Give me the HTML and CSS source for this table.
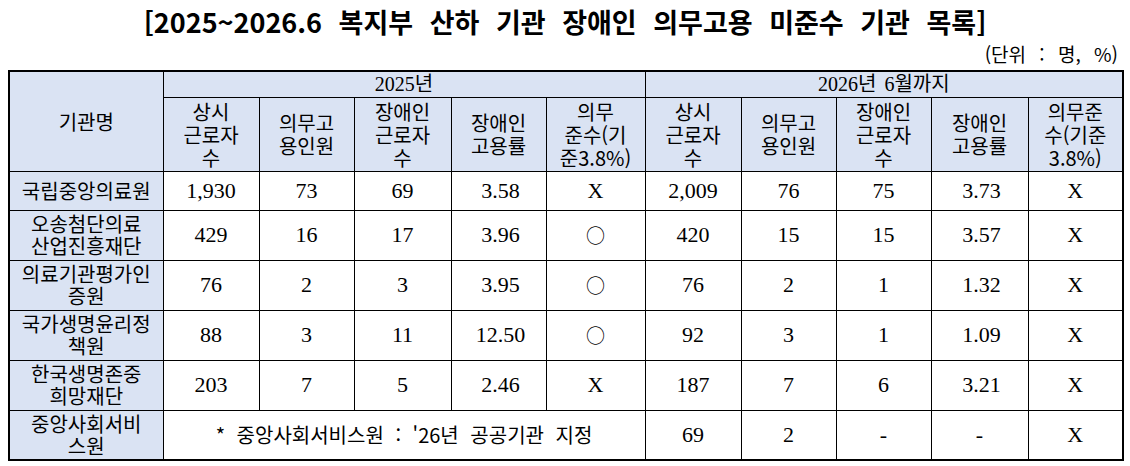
FILE: index.html
```html
<!DOCTYPE html>
<html lang="ko">
<head>
<meta charset="utf-8">
<title>복지부 산하 기관 장애인 의무고용 미준수 기관 목록</title>
<link rel="stylesheet" href="styles.css">
</head>
<body>
<div class="page">
  <h1 class="title">[2025~2026.6 복지부 산하 기관 장애인 의무고용 미준수 기관 목록]</h1>
  <div class="unit">(단위 : 명, %)</div>
  <table class="grid">
    <colgroup>
      <col class="c-name"><col class="c1"><col class="c2"><col class="c3"><col class="c4"><col class="c5">
      <col class="c6"><col class="c7"><col class="c8"><col class="c9"><col class="c10">
    </colgroup>
    <thead>
      <tr class="h1row">
        <th rowspan="2" class="hd">기관명</th>
        <th colspan="5" class="hd year">2025년</th>
        <th colspan="5" class="hd year">2026년 6월까지</th>
      </tr>
      <tr class="h2row">
        <th class="hd">상시<br>근로자<br>수</th>
        <th class="hd">의무고<br>용인원</th>
        <th class="hd">장애인<br>근로자<br>수</th>
        <th class="hd">장애인<br>고용률</th>
        <th class="hd">의무<br>준수(기<br>준3.8%)</th>
        <th class="hd">상시<br>근로자<br>수</th>
        <th class="hd">의무고<br>용인원</th>
        <th class="hd">장애인<br>근로자<br>수</th>
        <th class="hd">장애인<br>고용률</th>
        <th class="hd">의무준<br>수(기준<br>3.8%)</th>
      </tr>
    </thead>
    <tbody>
      <tr class="r-short">
        <th class="name">국립중앙의료원</th>
        <td>1,930</td><td>73</td><td>69</td><td class="rate">3.58</td><td>X</td>
        <td>2,009</td><td>76</td><td>75</td><td class="rate">3.73</td><td>X</td>
      </tr>
      <tr class="r-tall">
        <th class="name">오송첨단의료<br>산업진흥재단</th>
        <td>429</td><td>16</td><td>17</td><td class="rate">3.96</td><td class="circ">○</td>
        <td>420</td><td>15</td><td>15</td><td class="rate">3.57</td><td>X</td>
      </tr>
      <tr class="r-tall">
        <th class="name">의료기관평가인<br>증원</th>
        <td>76</td><td>2</td><td>3</td><td class="rate">3.95</td><td class="circ">○</td>
        <td>76</td><td>2</td><td>1</td><td class="rate">1.32</td><td>X</td>
      </tr>
      <tr class="r-tall">
        <th class="name">국가생명윤리정<br>책원</th>
        <td>88</td><td>3</td><td>11</td><td class="rate">12.50</td><td class="circ">○</td>
        <td>92</td><td>3</td><td>1</td><td class="rate">1.09</td><td>X</td>
      </tr>
      <tr class="r-tall">
        <th class="name">한국생명존중<br>희망재단</th>
        <td>203</td><td>7</td><td>5</td><td class="rate">2.46</td><td>X</td>
        <td>187</td><td>7</td><td>6</td><td class="rate">3.21</td><td>X</td>
      </tr>
      <tr class="r-tall">
        <th class="name">중앙사회서비<br>스원</th>
        <td colspan="5" class="note">* 중앙사회서비스원 : '26년 공공기관 지정</td>
        <td>69</td><td>2</td><td class="dash">-</td><td class="dash">-</td><td>X</td>
      </tr>
    </tbody>
  </table>
</div>
</body>
</html>
```

FILE: styles.css
```css
html, body {
  margin: 0;
  padding: 0;
  background: #ffffff;
}

.page {
  padding: 0 8px;
  width: 1114px;
  color: #000;
  font-family: "Noto Sans CJK KR", "Noto Sans", sans-serif;
}

.title {
  margin: 0;
  height: 44px;
  font-size: 27px;
  line-height: 44px;
  font-weight: 700;
  text-align: center;
  word-spacing: 9px;
  letter-spacing: 0;
}

.unit {
  height: 26px;
  font-size: 19px;
  line-height: 20px;
  text-align: right;
  padding-right: 4px;
  word-spacing: 8px;
}

.grid {
  width: 1114px;
  table-layout: fixed;
  border-collapse: collapse;
  border: 2px solid #000;
}

.c-name { width: 154px; }
.c1 { width: 96px; }
.c2 { width: 95px; }
.c3 { width: 97px; }
.c4 { width: 95px; }
.c5 { width: 99px; }
.c6 { width: 96px; }
.c7 { width: 95px; }
.c8 { width: 95px; }
.c9 { width: 97px; }
.c10 { width: 95px; }

.grid th,
.grid td {
  border: 1px solid #000;
  padding: 0;
  text-align: center;
  vertical-align: middle;
  overflow: hidden;
}

.hd {
  background: #dae3f3;
  font-weight: 400;
  font-size: 20px;
  line-height: 23px;
}

.year {
  font-family: "Liberation Serif", "Noto Sans CJK KR", serif;
  font-size: 20px;
  line-height: 24px;
  word-spacing: 3px;
}

.h1row { height: 26px; }
.h2row { height: 74px; }
.r-short { height: 39px; }
.r-tall { height: 50px; }

.name {
  background: #dae3f3;
  font-weight: 400;
  font-size: 20px;
  line-height: 22px;
}

.grid td {
  font-family: "Liberation Serif", "Noto Sans CJK KR", serif;
  font-size: 22px;
  line-height: 24px;
}

.grid td.rate {
  padding-left: 4px;
}

.grid td.circ {
  font-family: "Noto Sans CJK KR", sans-serif;
  font-size: 19px;
}

.grid td.note {
  font-family: "Noto Sans CJK KR", sans-serif;
  font-size: 20px;
  word-spacing: 6px;
}

.grid td.dash {
  font-size: 22px;
}
```
